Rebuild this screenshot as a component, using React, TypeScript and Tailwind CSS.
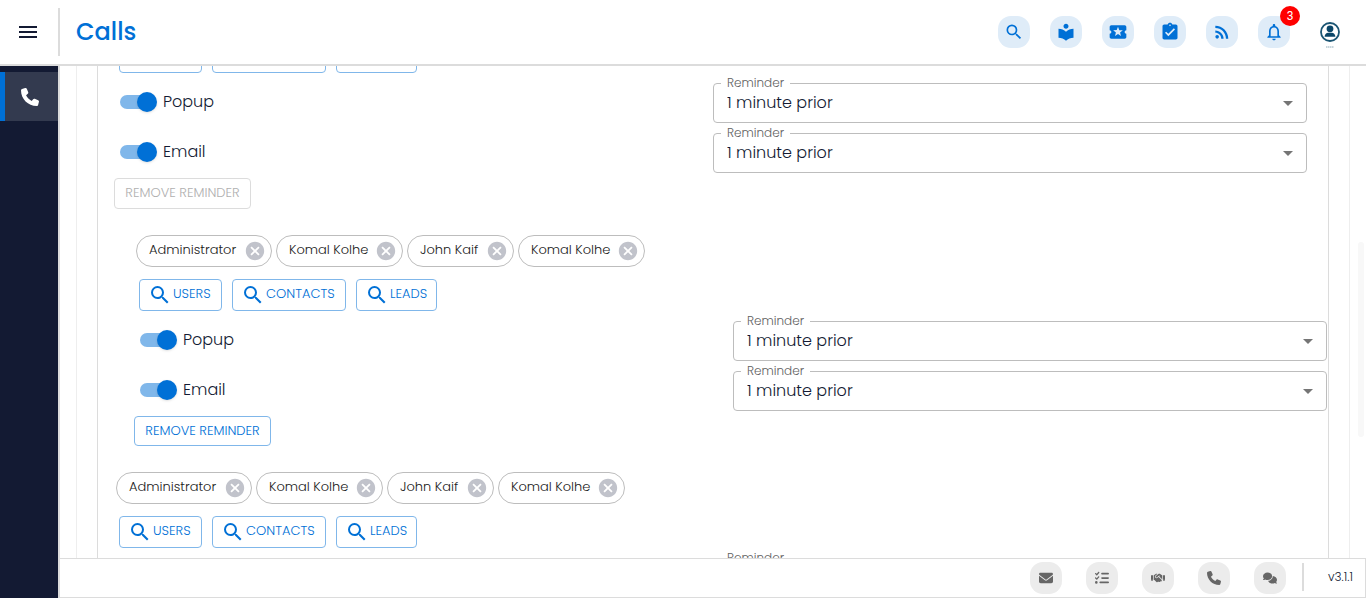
import { useId, useState } from 'react';
import type { ReactNode } from 'react';
import {
  MdSearch,
  MdLocalLibrary,
  MdLocalActivity,
  MdAssignmentTurnedIn,
  MdRssFeed,
  MdNotificationsNone,
  MdMenu,
  MdCancel,
  MdArrowDropDown,
} from 'react-icons/md';
import { FaEnvelope, FaListCheck, FaHandshake, FaPhone, FaComments } from 'react-icons/fa6';

const invitees = [
  { name: 'Administrator', width: 'w-[136px]' },
  { name: 'Komal Kolhe', width: 'w-[127px]' },
  { name: 'John Kaif', width: 'w-[107px]' },
  { name: 'Komal Kolhe', width: 'w-[127px]' },
];

const lookups = [
  { name: 'USERS', width: 'w-[83px]' },
  { name: 'CONTACTS', width: 'w-[114px]' },
  { name: 'LEADS', width: 'w-[81px]' },
];

function HeaderButton({ label, children }: { label: string; children: ReactNode }) {
  return (
    <button
      type="button"
      aria-label={label}
      className="relative flex size-8 items-center justify-center rounded-[13px] bg-[#dfecf8] text-[#0070d6]"
    >
      {children}
    </button>
  );
}

function FooterButton({ label, children }: { label: string; children: ReactNode }) {
  return (
    <button
      type="button"
      aria-label={label}
      className="flex size-8 items-center justify-center rounded-[13px] bg-[#ececec] text-[#666666]"
    >
      {children}
    </button>
  );
}

function Chip({ name, width }: { name: string; width: string }) {
  return (
    <li className={`flex h-8 items-center justify-between rounded-full border border-[#bdbdbd] pr-[5px] pl-3 ${width}`}>
      <span className="pb-[2px] text-[13px] leading-5 whitespace-nowrap text-[#212121]">{name}</span>
      <button type="button" aria-label={`Remove ${name}`} className="text-[#c1c3cb]">
        <MdCancel size={22} />
      </button>
    </li>
  );
}

function ReminderRow({ label }: { label: string }) {
  const id = useId();
  const [on, setOn] = useState(true);
  return (
    <div className="grid grid-cols-2 items-center">
      <label className="flex items-center gap-[9px] pb-[2px] pl-px text-[16px] leading-6 text-[#131a33]">
        <input
          type="checkbox"
          checked={on}
          onChange={() => setOn(!on)}
          className="relative h-[14px] w-[34px] appearance-none rounded-full bg-[#b5b5b5] before:absolute before:-top-[3px] before:left-0 before:size-5 before:rounded-full before:bg-[#fafafa] before:shadow checked:bg-[#80b7ea] checked:before:left-[17px] checked:before:bg-[#0070d6]"
        />
        {label}
      </label>
      <div className="relative h-10">
        <label htmlFor={id} className="absolute -top-2 left-2 bg-white px-[6px] text-[12px] leading-4 text-[#616161]">
          Reminder
        </label>
        <select
          id={id}
          defaultValue="1"
          className="h-10 w-full appearance-none rounded border border-[#bdbdbd] px-[13px] pb-px text-[16px] text-[#131a33]"
        >
          <option value="1">1 minute prior</option>
          <option value="5">5 minutes prior</option>
          <option value="10">10 minutes prior</option>
        </select>
        <MdArrowDropDown size={24} className="pointer-events-none absolute top-2 right-[7px] text-[#757575]" />
      </div>
    </div>
  );
}

function Lookups() {
  return (
    <div className="ml-[5px] flex gap-[10px]">
      {lookups.map(({ name, width }) => (
        <button
          key={name}
          type="button"
          className={`flex h-8 items-center rounded border border-[#80b7ea] pl-2 text-[13px] leading-5 text-[#0070d6] ${width}`}
        >
          <MdSearch size={24} className="shrink-0" />
          <span className="pb-[2px] pl-px">{name}</span>
        </button>
      ))}
    </div>
  );
}

function ReminderGroup({ indented = false, chips = true, removable = true }: { indented?: boolean; chips?: boolean; removable?: boolean }) {
  return (
    <section className={indented ? 'pr-px pl-9' : 'pr-[21px] pl-4'}>
      {chips && (
        <ul className="mb-3 ml-[2px] flex gap-1">
          {invitees.map((person, i) => (
            <Chip key={i} {...person} />
          ))}
        </ul>
      )}
      <Lookups />
      <div className="mt-[10px] ml-[5px] flex flex-col gap-[10px]">
        <ReminderRow label="Popup" />
        <ReminderRow label="Email" />
      </div>
      <button
        type="button"
        disabled={!removable}
        className="mt-[5px] block h-[30px] w-[137px] rounded border border-[#80b7ea] text-[13px] leading-5 whitespace-nowrap text-[#0070d6] disabled:h-[31px] disabled:border-[#dcdcdc] disabled:pb-px disabled:text-[#b0b0b0]"
      >
        REMOVE REMINDER
      </button>
    </section>
  );
}

export default function App() {
  return (
    <div className="flex h-screen flex-col bg-white font-['Poppins','Inter',sans-serif] font-light">
      <header className="flex h-[66px] shrink-0 items-center border-b-2 border-[#dcdcdc]">
        <button type="button" aria-label="Menu" className="flex w-[58px] justify-center pr-[2px] text-[#131a33]">
          <MdMenu size={24} />
        </button>
        <div className="h-12 w-[2px] bg-[#dcdcdc]" />
        <h1 className="ml-4 text-[24px] leading-8 font-medium text-[#0070d6]">Calls</h1>
        <div className="ml-auto flex items-center gap-5">
          <HeaderButton label="Search"><MdSearch size={20} /></HeaderButton>
          <HeaderButton label="Library"><MdLocalLibrary size={20} /></HeaderButton>
          <HeaderButton label="Tickets"><MdLocalActivity size={20} /></HeaderButton>
          <HeaderButton label="Tasks"><MdAssignmentTurnedIn size={20} /></HeaderButton>
          <HeaderButton label="Feed"><MdRssFeed size={20} /></HeaderButton>
          <HeaderButton label="Notifications">
            <MdNotificationsNone size={20} />
            <span className="absolute -top-[10px] -right-[10px] flex size-5 items-center justify-center rounded-full bg-[#ff0000] font-['Roboto',sans-serif] text-[12px] leading-none font-normal text-white">
              3
            </span>
          </HeaderButton>
        </div>
        <button type="button" aria-label="Account" className="mr-[26px] ml-[30px] flex w-5 justify-center pt-1">
          <svg width="20" height="28" viewBox="0 0 20 28" className="shrink-0">
            <circle cx="10" cy="12" r="9" fill="#ffffff" stroke="#1b5573" strokeWidth="1.8" />
            <circle cx="10" cy="8.8" r="3.4" fill="#0b4668" />
            <path d="M4.6 16.800c0-2.600 1.600-3.900 3.600-4.100h3.600c2 .2 3.600 1.500 3.600 4.100z" fill="#0b4668" />
            <path d="M6 27h8" stroke="#b4c6d0" strokeWidth="1.500" strokeDasharray="1.500 .5" />
          </svg>
        </button>
      </header>

      <div className="flex min-h-0 flex-1">
        <nav className="w-[60px] shrink-0 border-r-2 border-[#dcdcdc] bg-[#131a33] pt-[6px]">
          <a
            href="#calls"
            aria-label="Calls"
            className="flex h-[49px] items-center justify-center border-l-[5px] border-[#0070d6] bg-[#333a4f] pr-[3px] text-white"
          >
            <FaPhone size={18} />
          </a>
        </nav>

        <div className="flex min-w-0 flex-1 flex-col">
          <main className="relative min-h-0 flex-1 overflow-hidden px-4">
            <div className="border-x border-[#eeeeee] px-5">
              <div className="-mt-[25px] flex flex-col gap-[26px] border-x border-[#dcdcdc]">
                <ReminderGroup chips={false} removable={false} />
                <ReminderGroup indented />
                <ReminderGroup />
              </div>
            </div>
            <div className="absolute top-44 right-[2px] h-[195px] w-[6px] rounded-full bg-[#f8f8f8]" />
          </main>

          <footer className="flex h-10 shrink-0 items-center border-y border-r border-[#dcdcdc]">
            <div className="ml-auto flex items-center gap-6">
              <FooterButton label="Mail"><FaEnvelope size={14} /></FooterButton>
              <FooterButton label="Tasks"><FaListCheck size={14} /></FooterButton>
              <FooterButton label="Meetings"><FaHandshake size={14} /></FooterButton>
              <FooterButton label="Calls"><FaPhone size={14} /></FooterButton>
              <FooterButton label="Chat"><FaComments size={14} /></FooterButton>
            </div>
            <div className="mb-[2px] ml-4 h-7 w-[2px] bg-[#dcdcdc]" />
            <span className="w-[61px] pr-3 pb-[2px] text-right text-[12px] leading-4 text-[#131a33]">v3.1.1</span>
          </footer>
        </div>
      </div>
    </div>
  );
}
